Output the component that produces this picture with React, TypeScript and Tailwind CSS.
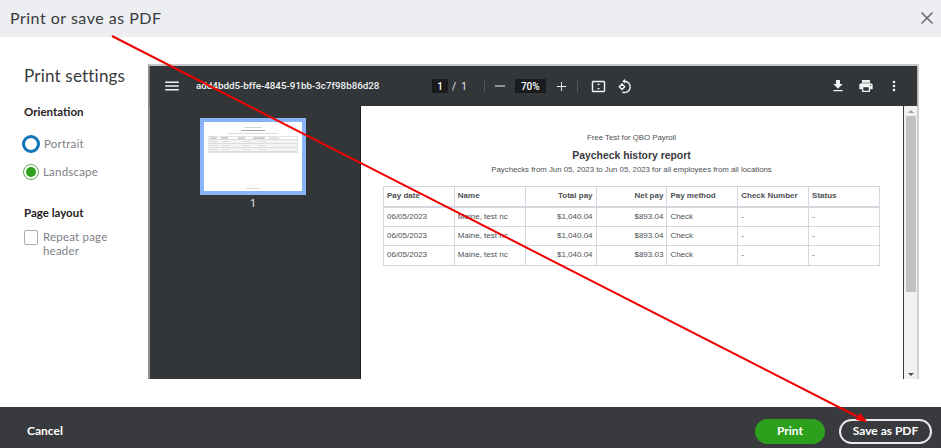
import { X } from "lucide-react";

const rows = [
  { date: "06/05/2023", name: "Maine, test nc", total: "$1,040.04", net: "$893.04" },
  { date: "06/05/2023", name: "Maine, test nc", total: "$1,040.04", net: "$893.04" },
  { date: "06/05/2023", name: "Maine, test nc", total: "$1,040.04", net: "$893.03" },
];

function Thumbnail() {
  return (
    <div className="h-[77px] w-[106px] overflow-hidden border-4 border-[#8ab4f8] bg-white px-[4px] pt-[5px]">
      <div className="mx-auto h-[1px] w-[18px] bg-[#d4d4d4]" />
      <div className="mx-auto mt-[2px] h-[1px] w-[24px] bg-[#a8a8a8]" />
      <div className="mx-auto mt-[2px] h-[1px] w-[50px] bg-[#dadada]" />
      <div className="mt-[2px] border border-[#e2e2e2]">
        <div className="flex h-[3px] gap-[4px] border-b border-[#dcdcdc] bg-white px-[1px]">
          <div className="w-[7px] bg-[#d0d0d0]" />
          <div className="w-[7px] bg-[#d0d0d0]" />
          <div className="ml-[6px] w-[7px] bg-[#d0d0d0]" />
          <div className="ml-[4px] w-[12px] bg-[#d0d0d0]" />
          <div className="w-[10px] bg-[#e6e6e6]" />
        </div>
        {rows.map((_, i) => (
          <div key={i} className="flex h-[4px] gap-[4px] border-b border-[#dcdcdc] bg-[#f4f4f4] px-[1px] py-px">
            <div className="w-[8px] bg-[#dddddd]" />
            <div className="w-[8px] bg-[#dddddd]" />
            <div className="ml-[8px] w-[8px] bg-[#dddddd]" />
            <div className="ml-[4px] w-[8px] bg-[#dddddd]" />
          </div>
        ))}
      </div>
      <div className="mx-auto mt-[35px] h-[1px] w-[14px] bg-[#d8d8d8]" />
    </div>
  );
}

function Toolbar() {
  return (
    <div className="flex h-[40px] shrink-0 items-center bg-[#323639] font-['Roboto',sans-serif] text-white shadow-[0_1px_2px_rgba(0,0,0,0.4)]">
      <svg viewBox="0 0 24 24" className="ml-[13px] h-[18px] w-[18px]" fill="#f1f3f4">
        <path d="M3 18h18v-2H3v2zm0-5h18v-2H3v2zm0-7v2h18V6H3z" />
      </svg>
      <span className="ml-[15px] w-[236px] text-[9.8px] font-medium text-[#f1f3f4]">
        add4bdd5-bffe-4845-91bb-3c7f98b86d28
      </span>
      <span className="flex h-[14px] w-[16px] items-center justify-center bg-[#191b1c] text-[10px] font-medium">1</span>
      <span className="ml-[4px] text-[10px] text-[#e8eaed]">/</span>
      <span className="ml-[5px] text-[10px] text-[#e8eaed]">1</span>
      <span className="ml-[17px] h-[11px] w-px bg-[#55595c]" />
      <svg viewBox="0 0 24 24" className="ml-[9px] h-[12px] w-[12px]" fill="#f1f3f4">
        <path d="M2 11h20v2H2z" />
      </svg>
      <span className="ml-[9px] flex h-[14px] w-[31px] items-center justify-center bg-[#191b1c] text-[10px] font-medium">70%</span>
      <svg viewBox="0 0 24 24" className="ml-[10px] h-[11px] w-[11px]" fill="#f1f3f4">
        <path d="M2 11h9V2h2v9h9v2h-9v9h-2v-9H2z" />
      </svg>
      <span className="ml-[10px] h-[11px] w-px bg-[#55595c]" />
      <svg viewBox="0 0 24 24" className="ml-[12px] h-[17px] w-[17px]" fill="none" stroke="#f1f3f4">
        <rect x="3.5" y="5" width="17" height="14" rx="1" strokeWidth="2" />
        <path d="M12 7.5l2 2.5h-4zM12 16.5l2-2.5h-4z" fill="#f1f3f4" stroke="none" />
      </svg>
      <svg viewBox="0 0 24 24" className="ml-[9px] h-[17px] w-[17px]" fill="none" stroke="#f1f3f4" strokeWidth="2">
        <path d="M12 4.5a8 8 0 1 1-3 15.4" />
        <path d="M13 1L9 4.5 13 8z" fill="#f1f3f4" stroke="none" />
        <path d="M8.5 8.5l3.8 3.8-3.8 3.8-3.8-3.8z" />
      </svg>
      <div className="ml-auto flex items-center gap-[12px] pr-[15px]">
        <svg viewBox="0 0 24 24" className="h-[16px] w-[16px]" fill="#f1f3f4">
          <path d="M19 9h-4V3H9v6H5l7 7 7-7zM5 18v2h14v-2H5z" />
        </svg>
        <svg viewBox="0 0 24 24" className="h-[16px] w-[16px]" fill="#f1f3f4">
          <path d="M19 8H5c-1.66 0-3 1.34-3 3v6h4v4h12v-4h4v-6c0-1.66-1.34-3-3-3zm-3 11H8v-5h8v5zm3-7c-.55 0-1-.45-1-1s.45-1 1-1 1 .45 1 1-.45 1-1 1zm-1-9H6v4h12V3z" />
        </svg>
        <svg viewBox="0 0 24 24" className="h-[16px] w-[16px]" fill="#f1f3f4">
          <path d="M12 8a2 2 0 1 0 0-4 2 2 0 0 0 0 4zm0 2a2 2 0 1 0 0 4 2 2 0 0 0 0-4zm0 6a2 2 0 1 0 0 4 2 2 0 0 0 0-4z" />
        </svg>
      </div>
    </div>
  );
}

function Report() {
  const th = "border border-[#d4d7dd] px-[3px] font-bold";
  const td = "border border-[#d4d7dd] px-[3px] font-normal";
  return (
    <div className="flex-1 bg-white pl-[22px] pt-[27px] font-['Liberation_Sans',sans-serif] text-[#4d5054]">
      <div className="w-[497px] text-center">
        <p className="text-[7.8px] leading-[10px]">Free Test for QBO Payroll</p>
        <p className="mt-[6px] text-[10.4px] font-bold leading-[14px] text-[#393a3d]">Paycheck history report</p>
        <p className="mt-[2px] text-[7.8px] leading-[10px]">
          Paychecks from Jun 05, 2023 to Jun 05, 2023 for all employees from all locations
        </p>
      </div>
      <table className="mt-[11px] w-[497px] table-fixed border-collapse text-[8px]">
        <thead>
          <tr className="h-[20px] border-b-2 border-[#d4d7dd]">
            <th className={`${th} text-left`}>Pay date</th>
            <th className={`${th} text-left`}>Name</th>
            <th className={`${th} text-right`}>Total pay</th>
            <th className={`${th} text-right`}>Net pay</th>
            <th className={`${th} text-left`}>Pay method</th>
            <th className={`${th} text-left`}>Check Number</th>
            <th className={`${th} text-left`}>Status</th>
          </tr>
        </thead>
        <tbody>
          {rows.map((row, i) => (
            <tr key={i} className="h-[19.5px]">
              <td className={td}>{row.date}</td>
              <td className={td}>{row.name}</td>
              <td className={`${td} text-right`}>{row.total}</td>
              <td className={`${td} text-right`}>{row.net}</td>
              <td className={td}>Check</td>
              <td className={td}>-</td>
              <td className={td}>-</td>
            </tr>
          ))}
        </tbody>
      </table>
    </div>
  );
}

function Viewer() {
  return (
    <div className="flex h-[315px] w-[771px] flex-col border-2 border-b-0 border-l-[#8f9194] border-r-[#d0d0d0] border-t-[#c9cacc] bg-[#525659]">
      <Toolbar />
      <div className="flex min-h-0 flex-1">
        <div className="flex w-[210px] shrink-0 flex-col items-center bg-[#323639] pr-[4px] pt-[12px]">
          <Thumbnail />
          <span className="mt-[3px] font-['Roboto',sans-serif] text-[10px] leading-[12px] text-[#e8eaed]">1</span>
        </div>
        <div className="w-px bg-[#1e2022]" />
        <Report />
        <div className="w-px bg-[#3a3a3a]" />
        <div className="flex w-[13px] shrink-0 flex-col items-center bg-[#f1f1f1]">
          <div className="mt-[4px] h-0 w-0 border-x-[3px] border-b-[3px] border-x-transparent border-b-[#a3a3a3]" />
          <div className="mt-[3px] h-[176px] w-[10px] bg-[#c1c1c1]" />
          <div className="mb-[3px] mt-auto h-0 w-0 border-x-[3px] border-t-[3px] border-x-transparent border-t-[#505050]" />
        </div>
      </div>
    </div>
  );
}

function Settings() {
  return (
    <div className="w-[148px] shrink-0 pl-[24px] pt-[1px]">
      <h2 className="text-[17px] leading-[22px] tracking-[0.2px] text-[#393a3d]">Print settings</h2>
      <h3 className="mt-[18px] text-[11.5px] font-bold leading-[14px] text-[#1f2022]">Orientation</h3>
      <div className="mt-[16px] flex items-center">
        <span className="-ml-[2px] h-[18px] w-[18px] rounded-full border-[3px] border-[#0d74b8]" />
        <span className="ml-[4px] text-[11.5px] leading-[16px] tracking-[0.2px] text-[#7d8085]">Portrait</span>
      </div>
      <div className="mt-[11px] flex items-center">
        <span className="-ml-[1px] flex h-[16px] w-[16px] items-center justify-center rounded-full border border-[#55b04a]">
          <span className="h-[10px] w-[10px] rounded-full bg-[#2ca01c]" />
        </span>
        <span className="ml-[4px] text-[11.5px] leading-[16px] tracking-[0.2px] text-[#7d8085]">Landscape</span>
      </div>
      <h3 className="mt-[26px] text-[11.5px] font-bold leading-[14px] text-[#1f2022]">Page layout</h3>
      <div className="mt-[10px] flex items-start gap-[5px]">
        <span className="h-[15px] w-[14px] shrink-0 rounded-[2px] border border-[#a9acb0]" />
        <span className="w-[90px] text-[11.5px] leading-[14px] tracking-[0.2px] text-[#7d8085]">Repeat page header</span>
      </div>
    </div>
  );
}

export default function App() {
  return (
    <div className="relative flex h-screen w-full flex-col overflow-hidden bg-white font-['Lato','Open_Sans',sans-serif]">
      <header className="flex h-[37px] shrink-0 items-center justify-between bg-[#eceef1] pb-[2px] pl-[10px] pr-[4px]">
        <h1 className="text-[16px] tracking-[0.5px] text-[#393a3d]">Print or save as PDF</h1>
        <X className="h-[20px] w-[20px] text-[#6b6c72]" strokeWidth={2} />
      </header>
      <main className="flex flex-1 items-start pt-[27px]">
        <Settings />
        <Viewer />
      </main>
      <footer className="flex h-[41px] shrink-0 items-center bg-[#393a3d] pl-[27px] pr-[9px] pt-[7px] text-[12px] font-bold text-white">
        <span>Cancel</span>
        <button className="ml-auto h-[25px] w-[70px] rounded-full bg-[#2ca01c]">Print</button>
        <button className="ml-[14px] h-[25px] w-[93px] rounded-full border-2 border-[#e8e9ea]">Save as PDF</button>
      </footer>
      {/* red annotation arrow drawn over the screenshot */}
      <svg className="pointer-events-none absolute left-0 top-0" width="941" height="448">
        <path d="M112 36L866 421" stroke="#f00000" strokeWidth="2" />
        <path d="M867 422L856 420L860 413z" fill="#f00000" />
      </svg>
    </div>
  );
}
